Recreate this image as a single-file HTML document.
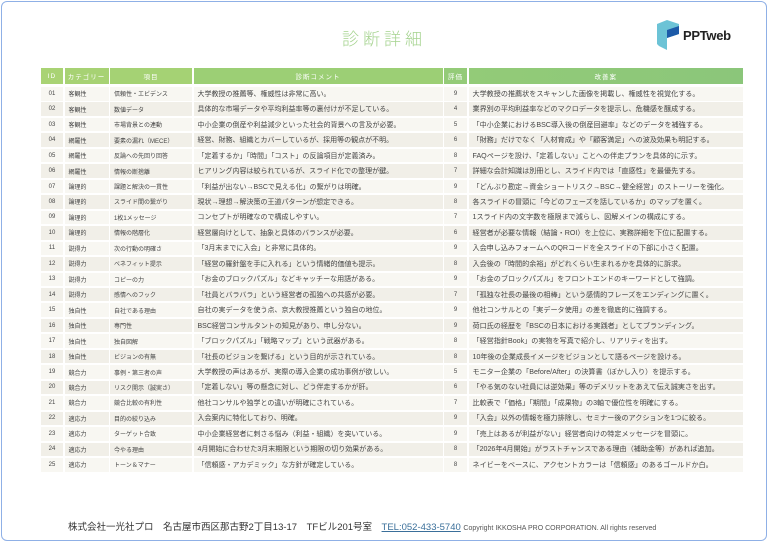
<!DOCTYPE html>
<html><head><meta charset="utf-8"><style>
*{margin:0;padding:0;box-sizing:border-box}
html,body{width:768px;height:543px;background:#fff;overflow:hidden;font-family:"Liberation Sans","Noto Sans CJK JP",sans-serif}
.frame{position:absolute;left:1px;top:1px;width:766px;height:540px;border:1.5px solid #8fb0e6;border-radius:6px}
.title{position:absolute;left:0;width:768px;top:25px;text-align:center;font-size:17px;color:#a5d38f;letter-spacing:4px;font-weight:300}
.row{position:absolute;left:41px;width:702px;display:flex;gap:1.5px}
.row div{height:100%;display:flex;align-items:center;font-size:6px;color:#444;white-space:nowrap;overflow:hidden}
.hd div{justify-content:center;color:#fff;font-size:6.5px;letter-spacing:1px}
.c1{width:22px;justify-content:center}.c2{width:44px;padding-left:4px}.c3{width:82px;padding-left:4px}
.c4{width:249px;padding-left:4px;font-size:7px!important}.c5{width:23px;justify-content:center}.c6{flex:1;padding-left:4px;font-size:7.1px!important}
.hd .c2,.hd .c3,.hd .c4,.hd .c6{padding-left:0;font-size:6.5px!important}
.foot{position:absolute;top:519px;left:68px;font-size:9.5px;color:#333;white-space:nowrap}
.foot a{color:#3a6f9a;text-decoration:underline}
.foot small{font-size:7px;color:#555}
</style></head><body>
<div class="frame"></div>
<div class="title">診断詳細</div>
<svg style="position:absolute;left:655px;top:18px" width="28" height="34" viewBox="0 0 28 34">
<path d="M2 6 L12 2 L24 6 L24 16 L12 20 L12 32 L4 28 L2 26 Z" fill="#6cc3d6"/>
<path d="M12 12 L24 8 L24 16 L12 20 Z" fill="#1c5aa8"/>
</svg>
<div style="position:absolute;left:683px;top:28px;font-size:13px;font-weight:bold;color:#222;letter-spacing:-0.3px">PPTweb</div>
<div class="row hd" style="top:68px;height:16px">
<div class="c1" style="background:#a9d374">ID</div><div class="c2" style="background:#a7d274">カテゴリー</div><div class="c3" style="background:#a5d274">項目</div><div class="c4" style="background:#9ccf75">診断コメント</div><div class="c5" style="background:#94cb78">評価</div><div class="c6" style="background:linear-gradient(90deg,#93cb78,#8bc67a)">改善案</div>
</div>
<div id="rows"></div>
<script>
var d=[
["01","客観性","信頼性・エビデンス","大学教授の推薦等、権威性は非常に高い。","9","大学教授の推薦状をスキャンした画像を掲載し、権威性を視覚化する。"],
["02","客観性","数値データ","具体的な市場データや平均利益率等の裏付けが不足している。","4","業界別の平均利益率などのマクロデータを提示し、危機感を醸成する。"],
["03","客観性","市場背景との連動","中小企業の倒産や利益減少といった社会的背景への言及が必要。","5","「中小企業におけるBSC導入後の倒産回避率」などのデータを補強する。"],
["04","網羅性","要素の漏れ（MECE）","経営、財務、組織とカバーしているが、採用等の観点が不明。","6","「財務」だけでなく「人材育成」や「顧客満足」への波及効果も明記する。"],
["05","網羅性","反論への先回り回答","「定着するか」「時間」「コスト」の反論項目が定義済み。","8","FAQページを設け、「定着しない」ことへの伴走プランを具体的に示す。"],
["06","網羅性","情報の断捨離","ヒアリング内容は絞られているが、スライド化での整理が鍵。","7","詳細な会計知識は別冊とし、スライド内では「直感性」を最優先する。"],
["07","論理的","課題と解決の一貫性","「利益が出ない→BSCで見える化」の繋がりは明確。","9","「どんぶり勘定→資金ショートリスク→BSC→健全経営」のストーリーを強化。"],
["08","論理的","スライド間の繋がり","現状→理想→解決策の王道パターンが想定できる。","8","各スライドの冒頭に「今どのフェーズを話しているか」のマップを置く。"],
["09","論理的","1枚1メッセージ","コンセプトが明確なので構成しやすい。","7","1スライド内の文字数を極限まで減らし、図解メインの構成にする。"],
["10","論理的","情報の階層化","経営層向けとして、抽象と具体のバランスが必要。","6","経営者が必要な情報（結論・ROI）を上位に、実務詳細を下位に配置する。"],
["11","説得力","次の行動の明確さ","「3月末までに入会」と非常に具体的。","9","入会申し込みフォームへのQRコードを全スライドの下部に小さく配置。"],
["12","説得力","ベネフィット提示","「経営の羅針盤を手に入れる」という情緒的価値も提示。","8","入会後の「時間的余裕」がどれくらい生まれるかを具体的に訴求。"],
["13","説得力","コピーの力","「お金のブロックパズル」などキャッチーな用語がある。","9","「お金のブロックパズル」をフロントエンドのキーワードとして強調。"],
["14","説得力","感情へのフック","「社員とバラバラ」という経営者の孤独への共感が必要。","7","「孤独な社長の最後の相棒」という感情的フレーズをエンディングに置く。"],
["15","独自性","自社である理由","自社の実データを使う点、京大教授推薦という独自の地位。","9","他社コンサルとの「実データ使用」の差を徹底的に強調する。"],
["16","独自性","専門性","BSC経営コンサルタントの知見があり、申し分ない。","9","荷口氏の経歴を「BSCの日本における実践者」としてブランディング。"],
["17","独自性","独自図解","「ブロックパズル」「戦略マップ」という武器がある。","8","「経営指針Book」の実物を写真で紹介し、リアリティを出す。"],
["18","独自性","ビジョンの有無","「社長のビジョンを繋げる」という目的が示されている。","8","10年後の企業成長イメージをビジョンとして語るページを設ける。"],
["19","競合力","事例・第三者の声","大学教授の声はあるが、実際の導入企業の成功事例が欲しい。","5","モニター企業の「Before/After」の決算書（ぼかし入り）を提示する。"],
["20","競合力","リスク開示（誠実さ）","「定着しない」等の懸念に対し、どう伴走するかが肝。","6","「やる気のない社員には逆効果」等のデメリットをあえて伝え誠実さを出す。"],
["21","競合力","競合比較の有利性","他社コンサルや独学との違いが明確にされている。","7","比較表で「価格」「期間」「成果物」の3軸で優位性を明確にする。"],
["22","適応力","目的の絞り込み","入会案内に特化しており、明確。","9","「入会」以外の情報を極力排除し、セミナー後のアクションを1つに絞る。"],
["23","適応力","ターゲット合致","中小企業経営者に刺さる悩み（利益・組織）を突いている。","9","「売上はあるが利益がない」経営者向けの特定メッセージを冒頭に。"],
["24","適応力","今やる理由","4月開始に合わせた3月末期限という期限の切り効果がある。","8","「2026年4月開始」がラストチャンスである理由（補助金等）があれば追加。"],
["25","適応力","トーン＆マナー","「信頼感・アカデミック」な方針が確定している。","8","ネイビーをベースに、アクセントカラーは「信頼感」のあるゴールドか白。"]];
var h="";
d.forEach(function(r,i){var bg=i%2?"#f1efe8":"#f8f7f2";var t=87+i*15.46;
h+='<div class="row" style="top:'+t+'px;height:13.5px">';
for(var k=0;k<6;k++)h+='<div class="c'+(k+1)+'" style="background:'+bg+'">'+r[k]+'</div>';
h+='</div>';});
document.getElementById("rows").innerHTML=h;
</script>
<div class="foot">株式会社一光社プロ　名古屋市西区那古野2丁目13-17　TFビル201号室　<a>TEL:052-433-5740</a> <small>Copyright IKKOSHA PRO CORPORATION. All rights reserved</small></div>
</body></html>
